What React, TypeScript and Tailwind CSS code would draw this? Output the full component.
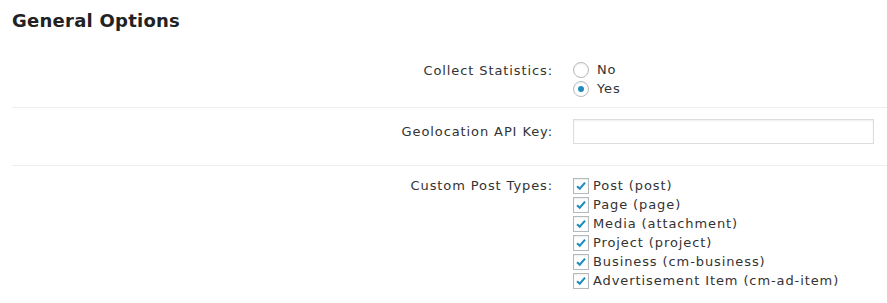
const postTypes = [
  "Post (post)",
  "Page (page)",
  "Media (attachment)",
  "Project (project)",
  "Business (cm-business)",
  "Advertisement Item (cm-ad-item)",
];

function Radio({ checked, label }: { checked?: boolean; label: string }) {
  return (
    <label className="flex items-center h-[19px]">
      <span className="flex items-center justify-center w-4 h-4 rounded-full border border-[#b4b9be] bg-white shadow-[inset_0_1px_2px_rgba(0,0,0,0.07)]">
        {checked && <span className="w-[6px] h-[6px] rounded-full bg-[#1e8cbe]" />}
      </span>
      <span className="ml-[8px]">{label}</span>
    </label>
  );
}

function Check({ label }: { label: string }) {
  return (
    <label className="flex items-center h-[19px]">
      <span className="flex items-center justify-center w-4 h-4 border border-[#b4b9be] bg-white shadow-[inset_0_1px_2px_rgba(0,0,0,0.07)]">
        <svg viewBox="0 0 16 16" className="w-[14px] h-[14px]">
          <path d="M3.5 8.2 L6.6 11.2 L12.6 4.2" fill="none" stroke="#1e8cbe" strokeWidth={2.4} />
        </svg>
      </span>
      <span className="ml-[4px]">{label}</span>
    </label>
  );
}

export default function App() {
  return (
    <div className="w-[887px] h-[303px] bg-white text-[#333] text-[13px] leading-[19px] tracking-[0.9px] font-['DejaVu_Sans',Verdana,sans-serif] overflow-hidden">
      <h2 className="pl-[12px] pt-[9px] text-[18px] leading-[23px] tracking-[0.25px] font-bold text-[#222]">General Options</h2>

      <div className="ml-[12px] mt-[28px]">
        <div className="flex pb-[9px] border-b border-[#eeeeee]">
          <div className="w-[541px] text-right pt-[1px]">Collect Statistics:</div>
          <div className="ml-[20px] flex flex-col">
            <Radio label="No" />
            <Radio checked label="Yes" />
          </div>
        </div>

        <div className="flex pt-[11px] pb-[21px] border-b border-[#eeeeee]">
          <div className="w-[541px] text-right pt-[3px]">Geolocation API Key:</div>
          <div className="ml-[20px]">
            <input
              type="text"
              className="w-[301px] h-[25px] border border-[#dddddd] bg-white shadow-[inset_0_1px_2px_rgba(0,0,0,0.07)] outline-none"
            />
          </div>
        </div>

        <div className="flex pt-[10px]">
          <div className="w-[541px] text-right">Custom Post Types:</div>
          <div className="ml-[20px] flex flex-col">
            {postTypes.map((t) => (
              <Check key={t} label={t} />
            ))}
          </div>
        </div>
      </div>
    </div>
  );
}
